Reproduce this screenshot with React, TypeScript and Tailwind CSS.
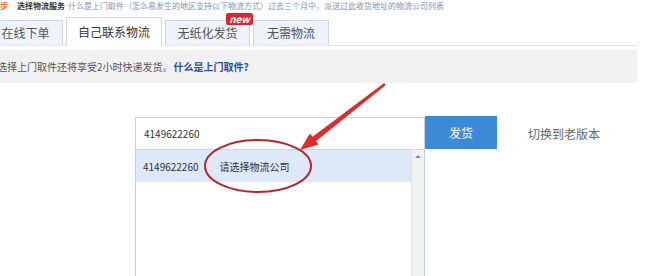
import React from "react";

export default function App() {
  const font = { fontFamily: '"Noto Sans CJK SC", "Noto Sans", sans-serif' };
  return (
    <div className="relative w-[653px] h-[276px] overflow-hidden bg-white text-[#333]" style={font}>
      {/* top line */}
      <div className="flex items-center h-[12px] text-[8px] leading-[12px] whitespace-nowrap">
        <span className="text-[#ef7a32] font-bold">步</span>
        <span className="ml-[9px] font-bold text-[#333]">选择物流服务</span>
        <span className="ml-[3px] text-[#7b93bd]">什么是上门取件（怎么易发生的地区支持以下物流方式）过去三个月中，派送过此收货地址的物流公司列表</span>
      </div>

      {/* tabs */}
      <div className="flex items-end gap-[3px] h-[34px] w-[649px] border-b border-[#dfe3ea] -ml-[12px]">
        <div className="flex items-center justify-center w-[75px] h-[25px] bg-[#eef3fa] border border-b-0 border-[#c9d6e8] text-[12px] text-[#555]">在线下单</div>
        <div className="flex items-center justify-center w-[96px] h-[29px] -mb-px bg-white border border-b-0 border-[#d4d8de] text-[12px] text-[#333]">自己联系物流</div>
        <div className="relative flex items-center justify-center w-[85px] h-[25px] bg-[#eef3fa] border border-b-0 border-[#c9d6e8] text-[12px] text-[#555]">
          无纸化发货
          <span className="absolute -top-[8px] -right-[4px] h-[12px] px-[3px] rounded-[2px] bg-[#d8262c] text-white text-[10px] leading-[12px] font-bold italic">new</span>
        </div>
        <div className="flex items-center justify-center w-[76px] h-[25px] bg-[#eef3fa] border border-b-0 border-[#c9d6e8] text-[12px] text-[#555]">无需物流</div>
      </div>

      {/* info bar */}
      <div className="mt-[4px] w-[637px] h-[33px] bg-[#f1f1f1] flex items-center text-[10px] whitespace-nowrap">
        <span className="-ml-[3px] text-[#555]">选择上门取件还将享受2小时快递发货。</span>
        <span className="ml-[1px] font-bold text-[#2b4f9c]">什么是上门取件?</span>
      </div>

      {/* main */}
      <div className="mt-[34px] pl-[135px] flex items-start">
        <div className="w-[290px]">
          <div className="h-[33px] border border-[#c4d6e6] flex items-center pl-[8px] text-[10px] text-[#333]">4149622260</div>
          <div className="h-[130px] border border-t-0 border-[#b8cfe2] flex">
            <div className="flex-1">
              <div className="h-[32px] bg-[#dde9f8] flex items-center pl-[7px] text-[10px] text-[#333]">
                <span>4149622260</span>
                <span className="ml-[21px]">请选择物流公司</span>
              </div>
            </div>
            <div className="w-[13px] bg-[#f1f1f1] border-l border-[#e2e2e2] flex justify-center pt-[5px]">
              <div className="w-0 h-0 border-l-[3px] border-r-[3px] border-b-[3px] border-l-transparent border-r-transparent border-b-[#8a8a8a]"></div>
            </div>
          </div>
        </div>
        <div className="-mt-[1px] w-[72px] h-[33px] bg-[#3b8ad6] text-white text-[12px] flex items-center justify-center">发货</div>
        <div className="ml-[31px] h-[33px] flex items-center text-[12px] text-[#666]">切换到老版本</div>
      </div>

      {/* annotation overlay */}
      <svg className="absolute left-0 top-0 pointer-events-none" width="653" height="276" viewBox="0 0 653 276">
        <ellipse cx="258" cy="166" rx="53" ry="26" fill="none" stroke="#b3262b" strokeWidth="2" />
        <polygon
          points="385.8,85 315.8,141.2 318.5,144.5 300,150 309.9,133.5 312.6,136.8 384.2,83"
          fill="#e12a2a"
        />
      </svg>
    </div>
  );
}
